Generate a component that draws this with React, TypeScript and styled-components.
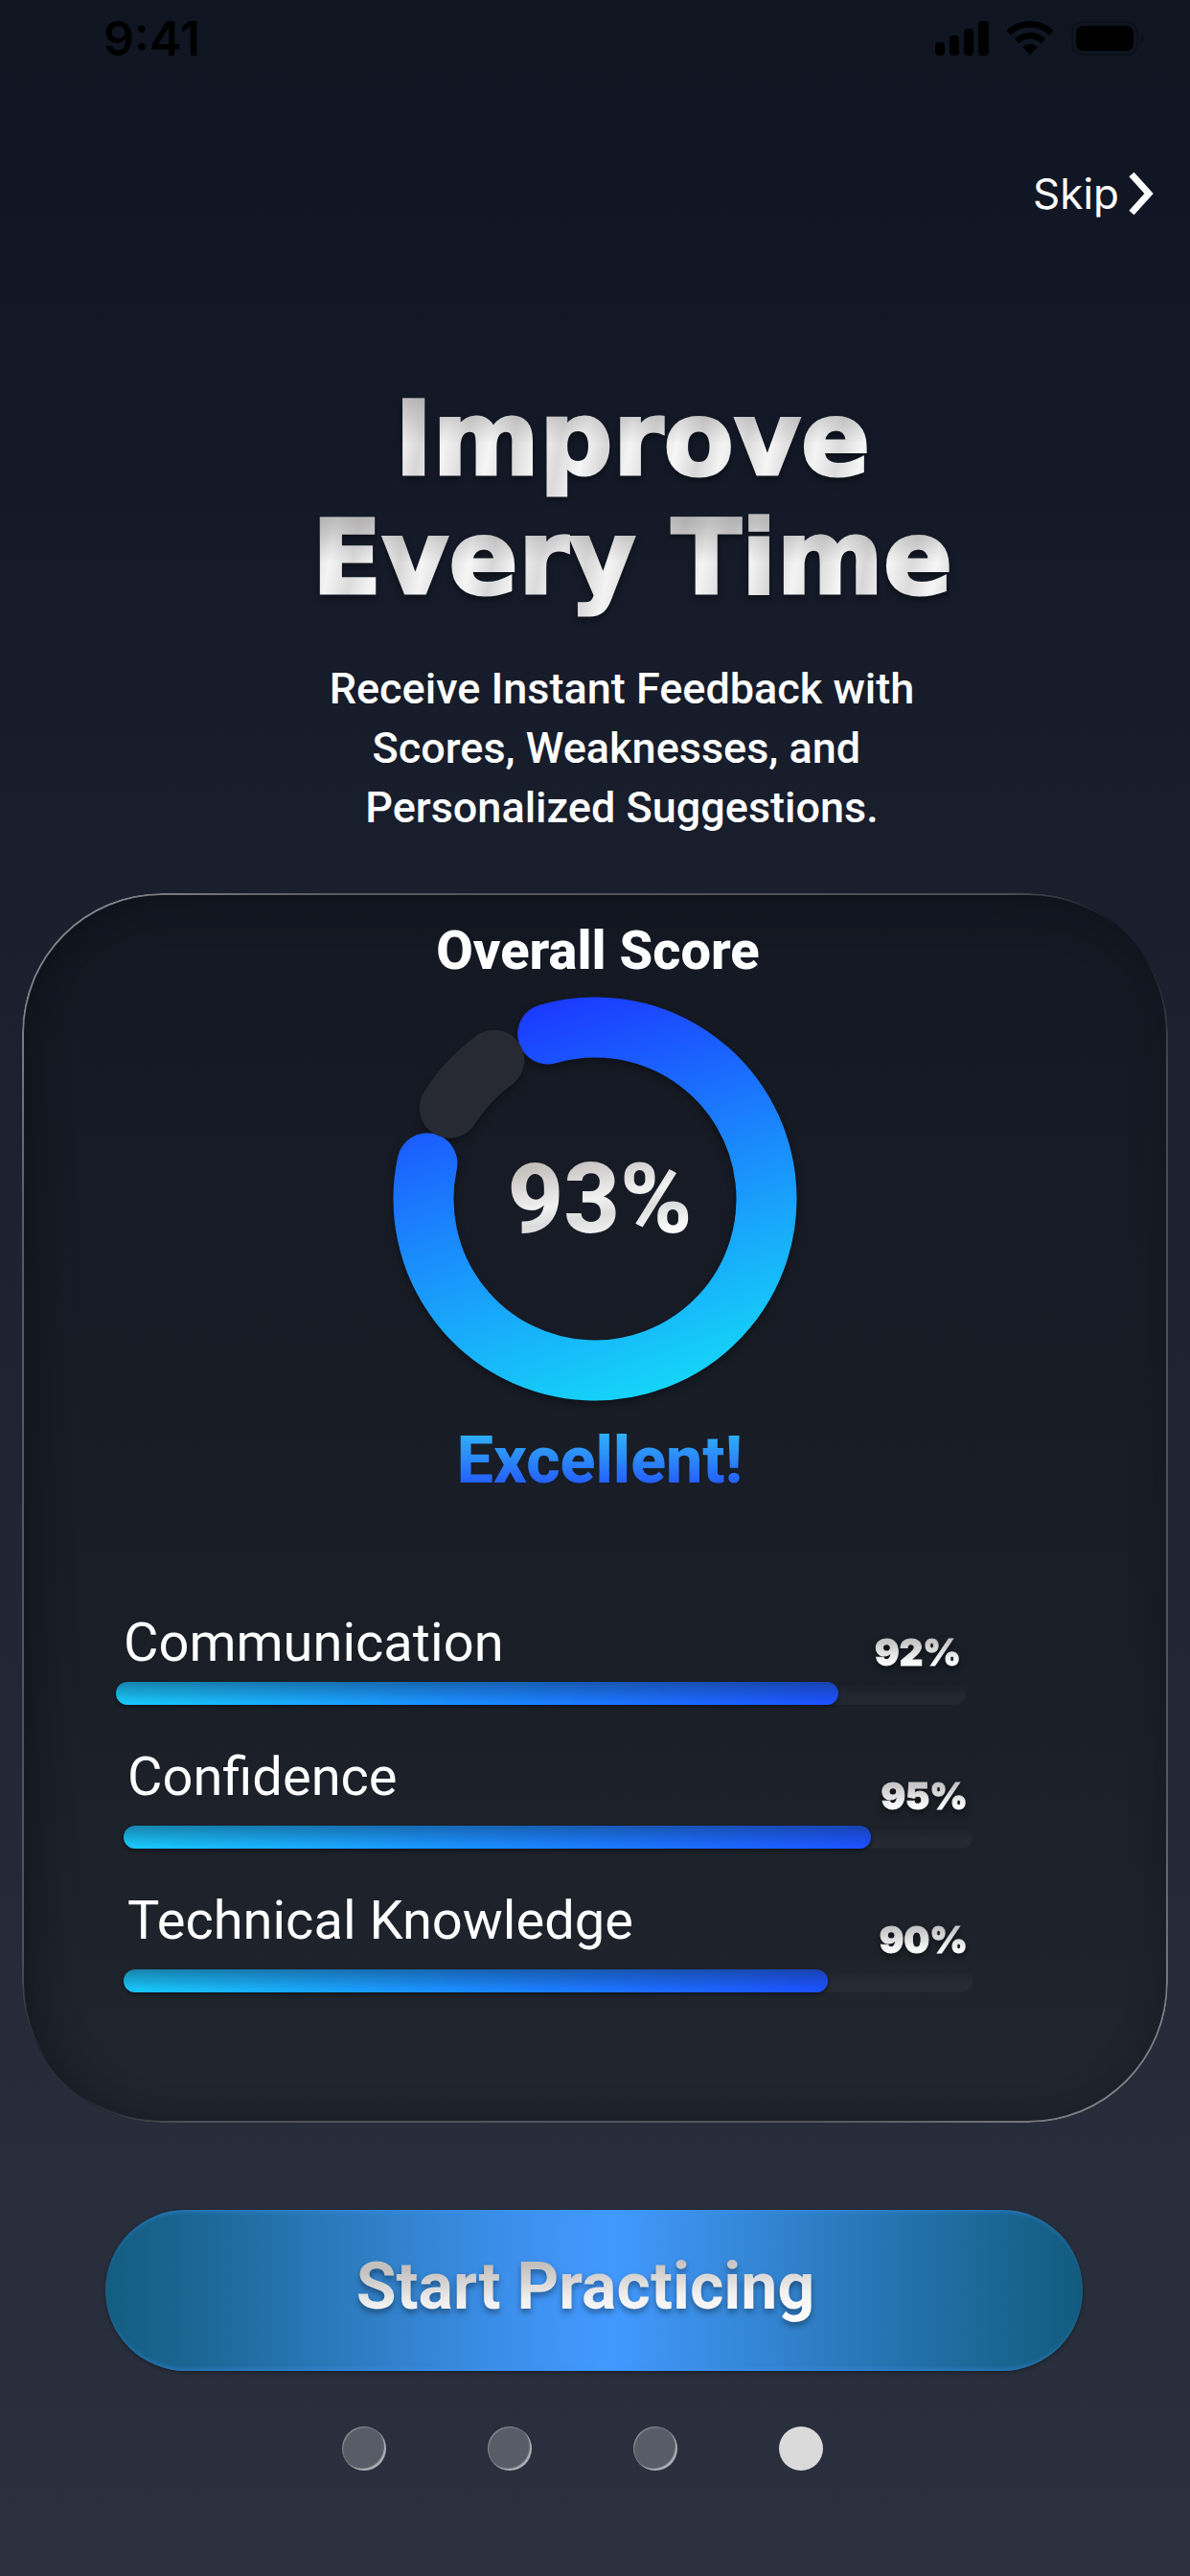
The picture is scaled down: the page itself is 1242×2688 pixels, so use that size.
import React from "react";
import styled, { createGlobalStyle, css } from "styled-components";

const GlobalStyle = createGlobalStyle`
  *, *::before, *::after { box-sizing: border-box; }
  body { margin: 0; background: #2a303c; }
  button { font: inherit; color: inherit; border: 0; padding: 0; background: none; cursor: pointer; }
`;

const Screen = styled.main`
  display: flex;
  flex-direction: column;
  min-height: 100vh;
  font-family: Roboto, "Liberation Sans", sans-serif;
  color: #fff;
  background: linear-gradient(180deg, #0f1521 0%, #121826 15%, #1a202e 38%, #1f2533 60%, #272d3b 85%, #2a303d 100%);
`;

const StatusBar = styled.header`
  display: flex;
  align-items: center;
  justify-content: space-between;
  height: 80px;
  padding: 0 48px 0 108px;
  color: #000;
`;

const Clock = styled.time`
  font: 600 50px/56px Inter, sans-serif;
`;

const StatusIcons = styled.div`
  display: flex;
  align-items: center;
  gap: 18px;
`;

const TopNav = styled.nav`
  display: flex;
  justify-content: flex-end;
  padding: 90px 38px 0 0;
`;

const SkipButton = styled.button`
  display: flex;
  align-items: center;
  gap: 10px;
  && { font: 400 44px/64px Inter, sans-serif; }
`;

const Intro = styled.section`
  display: flex;
  flex-direction: column;
  align-items: center;
  gap: 44px;
  padding: 162px 0 0 56px;
  text-align: center;
`;

const silver = css`
  color: transparent;
  background-clip: text;
  -webkit-background-clip: text;
`;

const Title = styled.h1`
  margin: 0;
  padding: 0 0 0 22px;
  font: 700 107px/124px "DejaVu Sans", sans-serif;
  -webkit-text-stroke: 3px transparent;
  ${silver}
  background-image:
    repeating-linear-gradient(180deg, rgba(140, 138, 138, 0.5) 0px, rgba(140, 138, 138, 0.5) 24px, rgba(140, 138, 138, 0) 66px, rgba(140, 138, 138, 0) 124px),
    repeating-linear-gradient(100deg, #dcdbdb 0px, #f6f6f6 24px, #d8d7d7 48px, #f4f4f4 72px, #dcdbdb 96px);
  filter: drop-shadow(0 4px 3px rgba(0, 0, 0, 0.4));
`;

const Lead = styled.p`
  margin: 0;
  font-size: 45px;
  line-height: 62px;
  font-weight: 500;
  white-space: pre;
`;

const Card = styled.section`
  position: relative;
  display: flex;
  flex-direction: column;
  align-items: center;
  margin: 58px 23px 0;
  padding: 28px 0 136px;
  border-radius: 146px;
  background: linear-gradient(180deg, #141822 0%, #171b25 25%, #191e27 60%, #20252e 100%);
  box-shadow: inset 8px 8px 40px rgba(6, 12, 20, 0.55);

  &::before {
    content: "";
    position: absolute;
    inset: 0;
    padding: 2px;
    border-radius: inherit;
    background: linear-gradient(to bottom right, rgba(255,255,255,0.55) 0%, rgba(255,255,255,0.3) 14%, rgba(255,255,255,0.25) 43%, transparent 49%, transparent 51%, rgba(255,255,255,0.22) 57%, rgba(255,255,255,0.26) 86%, rgba(255,255,255,0.5) 100%);
    mask: linear-gradient(#000 0 0) content-box exclude, linear-gradient(#000 0 0);
    pointer-events: none;
  }
`;

const CardTitle = styled.h2`
  margin: 0;
  padding-left: 6px;
  font-size: 56px;
  line-height: 64px;
  font-weight: 800;
`;

const Gauge = styled.div`
  display: grid;
  place-items: center;
  margin-top: 16px;

  > * { grid-area: 1 / 1; }
`;

const GaugeSvg = styled.svg`
  display: block;
  filter: drop-shadow(0 4px 4px rgba(0, 0, 0, 0.35));
`;

const Score = styled.output`
  padding-left: 10px;
  font-size: 102px;
  line-height: 112px;
  font-weight: 800;
  ${silver}
  background-image: linear-gradient(170deg, #c4c0be 20%, #f2f2f2 50%, #dcdcdc 62%, #fafafa 80%);
`;

const Verdict = styled.p`
  margin: 22px 0 0;
  padding-left: 10px;
  font-size: 68px;
  line-height: 80px;
  font-weight: 800;
  ${silver}
  background-image: linear-gradient(180deg, #2fb0f8 15%, #2b86f8 50%, #2358ff 85%);
`;

const Skills = styled.ul`
  align-self: stretch;
  display: flex;
  flex-direction: column;
  gap: 43px;
  margin: 118px 204px 0 106px;
  padding: 0;
  list-style: none;
`;

const Skill = styled.li<{ $lead?: boolean }>`
  display: grid;
  grid-template-columns: 1fr auto;
  row-gap: 9px;
  margin: ${(p) => (p.$lead ? "0 7px 0 -8px" : "0")};
`;

const SkillName = styled.span<{ $lead?: boolean }>`
  padding: ${(p) => (p.$lead ? "0 0 0 8px" : "0 0 10px 4px")};
  font-size: 56px;
  line-height: 64px;
`;

const SkillValue = styled.span`
  align-self: end;
  padding-right: 5px;
  font: 900 38px/44px Inter, sans-serif;
  -webkit-text-stroke: 1px transparent;
  ${silver}
  background-image: linear-gradient(180deg, #c8c6c6 25%, #fafafa 75%);
  filter: drop-shadow(0 3px 3px rgba(0, 0, 0, 0.5));
`;

const Track = styled.div`
  grid-column: 1 / -1;
  height: 24px;
  border-radius: 12px;
  background: linear-gradient(180deg, rgba(255,255,255,0) 10%, rgba(255,255,255,0.035) 60%);
`;

const Fill = styled.div`
  height: 24px;
  border-radius: 12px;
  background:
    linear-gradient(180deg, rgba(20, 50, 80, 0.45) 0%, rgba(20, 50, 80, 0) 90%),
    linear-gradient(90deg, #18c8f8 0%, #1a8fff 45%, #1c50ff 100%);
  box-shadow: 0 2px 4px rgba(0, 0, 0, 0.45);
`;

const Footer = styled.footer`
  display: flex;
  flex-direction: column;
  padding: 91px 112px 0 110px;
`;

const StartButton = styled.button`
  height: 168px;
  border-radius: 84px;
  && {
    padding: 0 18px 8px 0;
    background: linear-gradient(90deg, #145d81 0%, #1a6591 8%, #2d7cc0 25%, #3d90ec 42%, #4299ff 52%, #3a8de4 61%, #2674b2 80%, #17638c 94%, #125b7e 100%);
  }
  box-shadow: inset 0 5px 4px -3px rgba(60, 150, 255, 0.4), inset 0 -5px 4px -3px rgba(60, 150, 255, 0.4), 0 2px 4px rgba(0, 0, 0, 0.3);
`;

const StartLabel = styled.span`
  font-size: 68px;
  line-height: 80px;
  font-weight: 700;
  ${silver}
  background-image: linear-gradient(178deg, #c4c0be 25%, #f0f0f0 62%, #fafafa 80%);
  filter: drop-shadow(0 4px 3px rgba(0, 0, 0, 0.35));
`;

const Dots = styled.div`
  display: flex;
  justify-content: center;
  gap: 106px;
  padding: 58px 24px 0 0;
`;

const Dot = styled.button<{ $on?: boolean }>`
  width: 46px;
  height: 46px;
  border-radius: 50%;
  && { background: ${(p) => (p.$on ? "#dadada" : "#575d67")}; }
  box-shadow: ${(p) => (p.$on ? "none" : "inset -2px -2px 1px rgba(255,255,255,0.5), inset 1px 1px 1px rgba(255,255,255,0.3)")};
`;

const RING = { size: 422, radius: 179, stroke: 63 };

function arc(from: number, to: number) {
  const c = RING.size / 2;
  const at = (deg: number) => {
    const a = ((deg - 90) * Math.PI) / 180;
    return `${c + RING.radius * Math.cos(a)} ${c + RING.radius * Math.sin(a)}`;
  };
  return `M${at(from)} A${RING.radius} ${RING.radius} 0 ${to - from > 180 ? 1 : 0} 1 ${at(to)}`;
}

const skills = [
  { id: "communication", name: "Communication", value: 92, fill: 85 },
  { id: "confidence", name: "Confidence", value: 95, fill: 88 },
  { id: "technical", name: "Technical Knowledge", value: 90, fill: 83 },
];

export default function App() {
  return (
    <Screen>
      <GlobalStyle />
      <StatusBar>
        <Clock>9:41</Clock>
        <StatusIcons>
          <svg width="56" height="36" viewBox="0 0 56 36" aria-hidden="true">
            <rect x="0" y="22" width="10" height="14" rx="4" />
            <rect x="15" y="15" width="10" height="21" rx="4" />
            <rect x="30" y="8" width="10" height="28" rx="4" />
            <rect x="45" y="0" width="11" height="36" rx="4" />
          </svg>
          <svg width="50" height="36" viewBox="0 0 50 36" aria-hidden="true">
            <path d="M25 0C15.500 0 6.800 3.700 .5 9.800L5 14.600C10.200 9.600 17.200 6.600 25 6.600s14.800 3 20 8l4.500-4.800C43.200 3.700 34.500 0 25 0Z" />
            <path d="M25 12c-6.200 0-11.900 2.400-16.100 6.400l4.600 4.800C16.500 20.300 20.500 18.600 25 18.600s8.500 1.700 11.500 4.600l4.600-4.800C36.900 14.400 31.200 12 25 12Z" />
            <path d="M25 24c-2.900 0-5.500 1.100-7.500 3L25 35.500 32.500 27c-2-1.900-4.600-3-7.500-3Z" />
          </svg>
          <svg width="76" height="36" viewBox="0 0 76 36" aria-hidden="true">
            <rect x="1" y="1" width="68" height="34" rx="11" fill="none" stroke="#000" strokeOpacity=".2" strokeWidth="2" />
            <rect x="5" y="5" width="60" height="26" rx="7" />
            <path d="M72 12c3 1 4 3.500 4 6s-1 5-4 6Z" opacity=".2" />
          </svg>
        </StatusIcons>
      </StatusBar>
      <TopNav>
        <SkipButton type="button">
          Skip
          <svg width="26" height="46" viewBox="0 0 26 46" aria-hidden="true">
            <path d="M3 3 21 23 3 43" fill="none" stroke="#fff" strokeWidth="7" />
          </svg>
        </SkipButton>
      </TopNav>
      <Intro>
        <Title>
          Improve
          <br />
          Every Time
        </Title>
        <Lead>{"Receive Instant Feedback with\nScores, Weaknesses, and\u00a0\nPersonalized Suggestions."}</Lead>
      </Intro>
      <Card>
        <CardTitle>Overall Score</CardTitle>
        <Gauge>
          <GaugeSvg width={RING.size} height={RING.size} viewBox={`0 0 ${RING.size} ${RING.size}`} aria-hidden="true">
            <defs>
              <linearGradient id="ring" gradientUnits="userSpaceOnUse" x1="140" y1="10" x2="270" y2="412">
                <stop offset="0" stopColor="#1b39ff" />
                <stop offset=".5" stopColor="#1a8bfc" />
                <stop offset="1" stopColor="#15d4f8" />
              </linearGradient>
            </defs>
            <g fill="none" strokeWidth={RING.stroke} strokeLinecap="round">
              <path d={arc(-16, 282)} stroke="url(#ring)" />
              <path d={arc(-58, -36)} stroke="#272a33" />
            </g>
          </GaugeSvg>
          <Score>93%</Score>
        </Gauge>
        <Verdict>Excellent!</Verdict>
        <Skills>
          {skills.map((s, i) => (
            <Skill key={s.id} $lead={i === 0}>
              <SkillName id={s.id} $lead={i === 0}>{s.name}</SkillName>
              <SkillValue>{s.value}%</SkillValue>
              <Track role="progressbar" aria-labelledby={s.id} aria-valuenow={s.value}>
                <Fill style={{ width: `${s.fill}%` }} />
              </Track>
            </Skill>
          ))}
        </Skills>
      </Card>
      <Footer>
        <StartButton type="button">
          <StartLabel>Start Practicing</StartLabel>
        </StartButton>
        <Dots>
          {[1, 2, 3, 4].map((n) => (
            <Dot key={n} type="button" $on={n === 4} aria-label={`Page ${n}`} />
          ))}
        </Dots>
      </Footer>
    </Screen>
  );
}
